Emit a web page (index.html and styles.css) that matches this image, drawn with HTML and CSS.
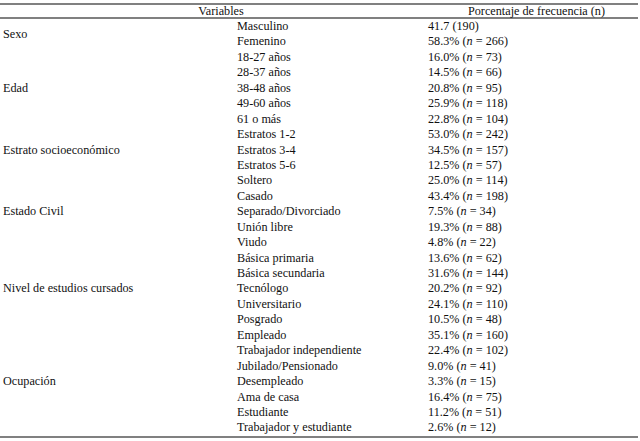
FILE: index.html
```html
<!DOCTYPE html>
<html lang="es">
<head>
<meta charset="utf-8">
<link rel="stylesheet" href="styles.css">
</head>
<body>
<table class="tbl">
<colgroup><col class="c1"><col class="c2"><col class="c3"></colgroup>
<thead>
<tr><th colspan="2" class="h-var">Variables</th><th class="h-pct">Porcentaje de frecuencia (n)</th></tr>
</thead>
<tbody>
<tr><td rowspan="2" class="grp">Sexo</td><td>Masculino</td><td>41.7 (190)</td></tr>
<tr><td>Femenino</td><td>58.3% (<i>n</i> = 266)</td></tr>
<tr><td rowspan="5" class="grp">Edad</td><td>18-27 años</td><td>16.0% (<i>n</i> = 73)</td></tr>
<tr><td>28-37 años</td><td>14.5% (<i>n</i> = 66)</td></tr>
<tr><td>38-48 años</td><td>20.8% (<i>n</i> = 95)</td></tr>
<tr><td>49-60 años</td><td>25.9% (<i>n</i> = 118)</td></tr>
<tr><td>61 o más</td><td>22.8% (<i>n</i> = 104)</td></tr>
<tr><td rowspan="3" class="grp">Estrato socioeconómico</td><td>Estratos 1-2</td><td>53.0% (<i>n</i> = 242)</td></tr>
<tr><td>Estratos 3-4</td><td>34.5% (<i>n</i> = 157)</td></tr>
<tr><td>Estratos 5-6</td><td>12.5% (<i>n</i> = 57)</td></tr>
<tr><td rowspan="5" class="grp">Estado Civil</td><td>Soltero</td><td>25.0% (<i>n</i> = 114)</td></tr>
<tr><td>Casado</td><td>43.4% (<i>n</i> = 198)</td></tr>
<tr><td>Separado/Divorciado</td><td>7.5% (<i>n</i> = 34)</td></tr>
<tr><td>Unión libre</td><td>19.3% (<i>n</i> = 88)</td></tr>
<tr><td>Viudo</td><td>4.8% (<i>n</i> = 22)</td></tr>
<tr><td rowspan="5" class="grp">Nivel de estudios cursados</td><td>Básica primaria</td><td>13.6% (<i>n</i> = 62)</td></tr>
<tr><td>Básica secundaria</td><td>31.6% (<i>n</i> = 144)</td></tr>
<tr><td>Tecnólogo</td><td>20.2% (<i>n</i> = 92)</td></tr>
<tr><td>Universitario</td><td>24.1% (<i>n</i> = 110)</td></tr>
<tr><td>Posgrado</td><td>10.5% (<i>n</i> = 48)</td></tr>
<tr><td rowspan="7" class="grp">Ocupación</td><td>Empleado</td><td>35.1% (<i>n</i> = 160)</td></tr>
<tr><td>Trabajador independiente</td><td>22.4% (<i>n</i> = 102)</td></tr>
<tr><td>Jubilado/Pensionado</td><td>9.0% (<i>n</i> = 41)</td></tr>
<tr><td>Desempleado</td><td>3.3% (<i>n</i> = 15)</td></tr>
<tr><td>Ama de casa</td><td>16.4% (<i>n</i> = 75)</td></tr>
<tr><td>Estudiante</td><td>11.2% (<i>n</i> = 51)</td></tr>
<tr><td>Trabajador y estudiante</td><td>2.6% (<i>n</i> = 12)</td></tr>
</tbody>
</table>
</body>
</html>
```
FILE: styles.css
```css
html, body {
  margin: 0;
  padding: 0;
  background: #fff;
}
body {
  padding-top: 3px;
  font-family: "Liberation Serif", "Times New Roman", serif;
  font-size: 12.2px;
  color: #111;
}
.tbl {
  width: 638px;
  border-collapse: collapse;
  table-layout: fixed;
  border-top: 2px solid #808080;
  border-bottom: 2px solid #808080;
}
.c1 { width: 237px; }
.c2 { width: 191px; }
.c3 { width: 210px; }
th {
  font-weight: normal;
  height: 12px;
  padding: 0;
  line-height: 12px;
  border-bottom: 2px solid #808080;
  text-align: center;
}
.h-var { padding-left: 14px; }
.h-pct { padding-left: 7px; }
td {
  padding: 0;
  height: 15.44px;
  line-height: 15.44px;
  vertical-align: middle;
  white-space: nowrap;
}
td.grp { padding-left: 3px; }
i { font-style: italic; }
```
